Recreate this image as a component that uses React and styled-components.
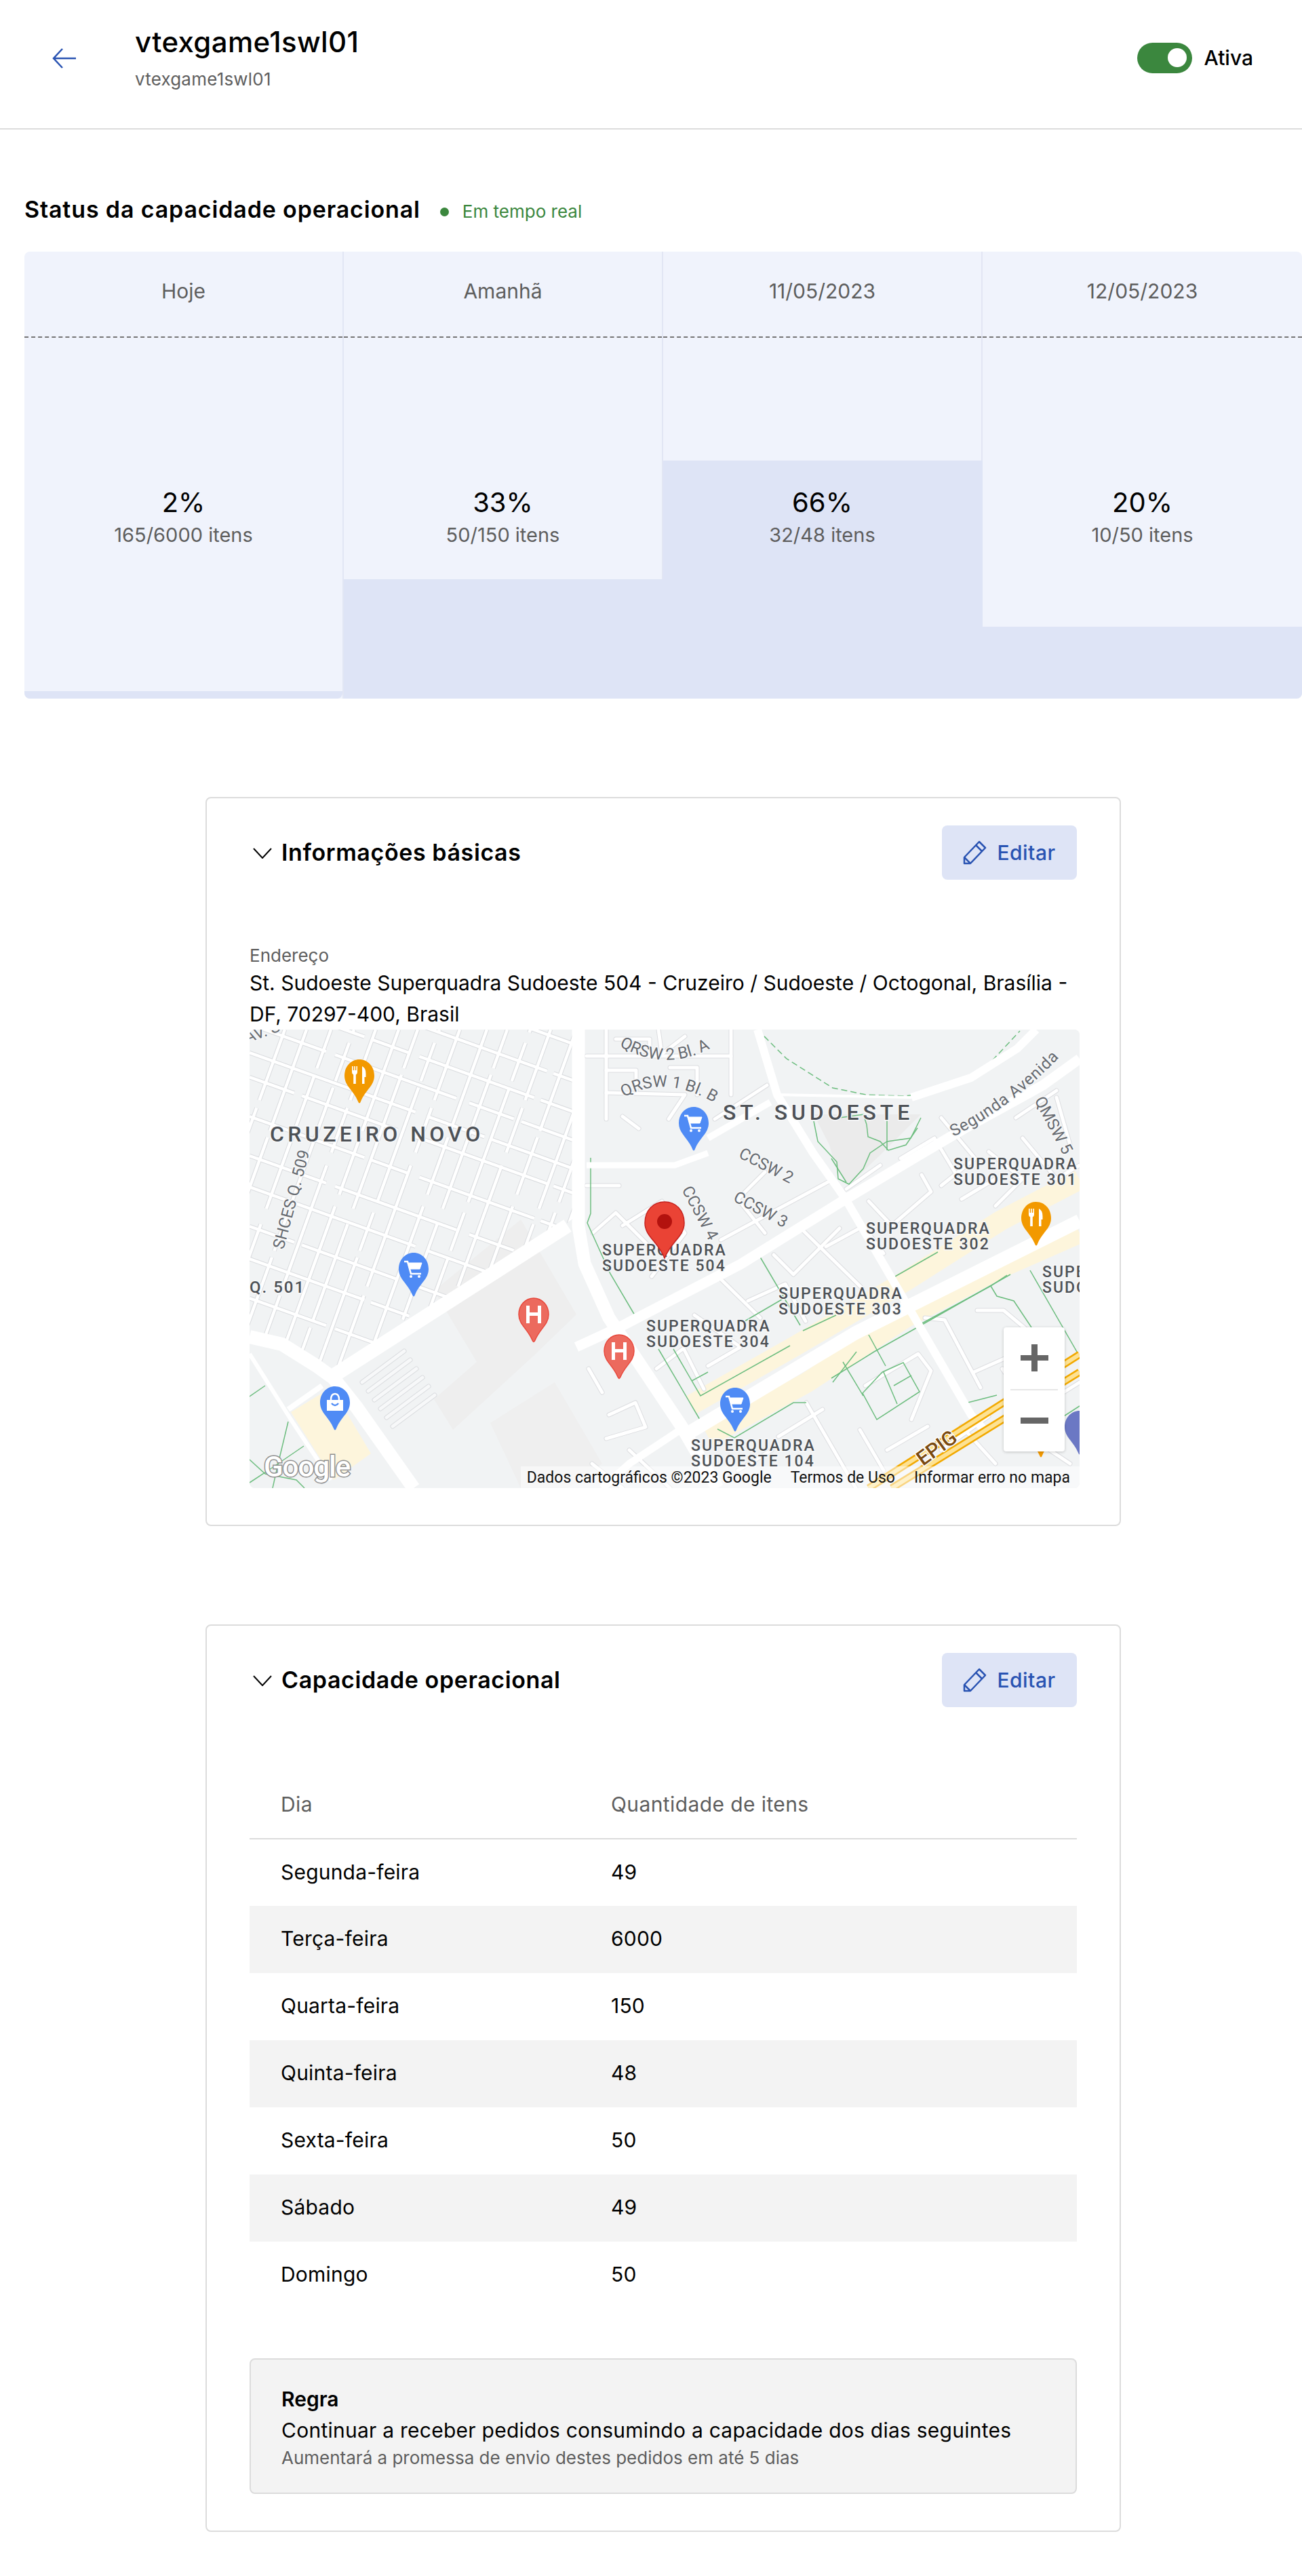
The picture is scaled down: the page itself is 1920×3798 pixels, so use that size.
import styled, { createGlobalStyle } from 'styled-components';

const GlobalStyle = createGlobalStyle`
    html, body {
        margin: 0;
        padding: 0;
        background: #fff;
        color: #000;
        font-family: "Inter", "Liberation Sans", sans-serif;
    }
    * { box-sizing: border-box; }
`

const TopBar = styled.header`
    height: 191px;
    padding: 38px 72px 0 77px;
    display: flex;
    align-items: flex-start;
    border-bottom: 2px solid #dcdcdc;
`
const BackLink = styled.a`
    display: flex;
    width: 36px;
    height: 96px;
    align-items: center;
    margin-right: 86px;
    color: #2953b2;
`
const TitleBlock = styled.div`
    flex: 1;
`
const StoreName = styled.h1`
    margin: 0;
    font-size: 42px;
    letter-spacing: 0.35px;
    line-height: 48px;
    font-weight: 500;
`
const StoreId = styled.div`
    margin-top: 14px;
    font-size: 26px;
    letter-spacing: 0.2px;
    line-height: 34px;
    color: #5e5e5e;
`
const ToggleWrap = styled.div`
    display: flex;
    align-items: center;
    height: 94px;
    gap: 18px;
`
const Toggle = styled.span`
    width: 81px;
    height: 45px;
    border-radius: 23px;
    background: #3b873e;
    display: flex;
    align-items: center;
    justify-content: flex-end;
    padding-right: 8px;

    &::after {
        content: "";
        width: 28px;
        height: 28px;
        border-radius: 50%;
        background: #fff;
    }
`
const ToggleLabel = styled.span`
    font-size: 30px;
    font-weight: 500;
`

const Main = styled.main`
    padding: 95px 0 65px 36px;
`
const StatusHeading = styled.div`
    display: flex;
    align-items: center;
    height: 44px;
`
const StatusTitle = styled.h2`
    margin: 0;
    font-size: 34px;
    font-weight: 600;
    letter-spacing: 0.85px;
`
const LiveDot = styled.span`
    width: 13px;
    height: 13px;
    margin: 8px 20px 0 29px;
    border-radius: 50%;
    background: #3b873e;
`
const LiveText = styled.span`
    margin-top: 6px;
    font-size: 26px;
    color: #3b873e;
`
const CapacityGrid = styled.div`
    margin-top: 41px;
    display: grid;
    grid-template-columns: repeat(4, 1fr);
    background: #f0f3fc;
    border-radius: 8px;
    overflow: hidden;
`
const DayColumn = styled.div`
    position: relative;
    border-right: 2px solid #e2e6f4;

    &:last-child { border-right: 0; }
`
const DayHead = styled.div`
    height: 127px;
    padding-top: 36px;
    text-align: center;
    font-size: 30px;
    line-height: 44px;
    color: #5e5e5e;
    border-bottom: 2px dashed #757575;
`
const DayBody = styled.div`
    position: relative;
    height: 532px;
    display: flex;
    flex-direction: column;
    align-items: center;
    justify-content: center;
`
const DayFill = styled.div`
    position: absolute;
    left: 0;
    right: -2px;
    bottom: 0;
    background: #dee4f6;

    ${DayColumn}:first-child & {
        right: 0;
        border-bottom-right-radius: 8px;
    }
`
const Percent = styled.div`
    position: relative;
    margin-top: -2px;
    font-size: 40px;
    line-height: 50px;
    font-weight: 400;
`
const Usage = styled.div`
    position: relative;
    margin-top: 1px;
    font-size: 29px;
    line-height: 44px;
    color: #5e5e5e;
`

const Card = styled.section`
    width: 1350px;
    margin: ${(p) => p.$top}px auto 0;
    padding: 40px 63px ${(p) => p.$bottom}px 63px;
    border: 2px solid #dcdcdc;
    border-radius: 8px;
`
const CardHeader = styled.div`
    display: flex;
    align-items: center;
    height: 80px;
    padding-left: 5px;
`
const Chevron = styled.svg`
    width: 28px;
    height: 16px;
    margin-right: 14px;
    margin-top: 2px;
`
const CardTitle = styled.h3`
    flex: 1;
    margin: -2px 0 0;
    font-size: 34px;
    font-weight: 600;
    letter-spacing: 0.6px;
`
const EditButton = styled.button`
    width: 199px;
    height: 80px;
    display: flex;
    align-items: center;
    justify-content: center;
    gap: 15px;
    border: 0;
    border-radius: 8px;
    background: #dee4f6;
    color: #2953b2;
    font-family: inherit;
    font-size: 30px;
    font-weight: 500;
    letter-spacing: 0.5px;
`
const FieldLabel = styled.div`
    margin-top: 94px;
    font-size: 26px;
    line-height: 35px;
    color: #5e5e5e;
`
const FieldValue = styled.div`
    font-size: 30px;
    line-height: 46px;
`
const MapFrame = styled.div`
    position: relative;
    width: 1224px;
    height: 676px;
    margin-right: -4px;
    border-radius: 8px;
    overflow: hidden;
    background: #f1f3f4;

    > svg { display: block; }
`
const Attribution = styled.div`
    position: absolute;
    right: 0;
    bottom: 0;
    width: 824px;
    height: 32px;
    padding-right: 14px;
    display: flex;
    justify-content: flex-end;
    align-items: center;
    gap: 28px;
    background: rgba(255, 255, 255, 0.5);
    font-family: "Roboto", sans-serif;
    font-size: 23px;
    color: #111;
`
const ZoomControl = styled.div`
    position: absolute;
    left: 1112px;
    top: 439px;
    width: 90px;
    height: 183px;
    display: flex;
    flex-direction: column;
    background: #fff;
    border-radius: 4px;
    box-shadow: 0 1px 4px rgba(0, 0, 0, 0.2);
`
const ZoomButton = styled.div`
    flex: 1;
    display: flex;
    align-items: center;
    justify-content: center;
    color: #666;

    & + & { border-top: 2px solid #e6e6e6; margin: 0 10px; }
`

const DaysTable = styled.table`
    width: 100%;
    margin-top: 93px;
    border-collapse: collapse;
    font-size: 30px;
`
const HeadCell = styled.th`
    height: 101px;
    padding: 0 0 0 ${(p) => p.$pad}px;
    text-align: left;
    font-weight: 400;
    letter-spacing: 0.4px;
    color: #5e5e5e;
    border-bottom: 2px solid #dcdcdc;
`
const DayRow = styled.tr`
    &:nth-child(even) { background: #f3f3f3; }
`
const DayCell = styled.td`
    height: 99px;
    width: ${(p) => (p.$wide ? "533px" : "auto")};
    padding: 0 0 3px ${(p) => p.$pad}px;
    letter-spacing: 0.2px;
`
const RuleBox = styled.div`
    height: 200px;
    margin-top: 73px;
    padding: 38px 45px 0;
    border: 2px solid #dcdcdc;
    border-radius: 8px;
    background: #f3f3f3;
`
const RuleTitle = styled.div`
    font-size: 30px;
    line-height: 40px;
    font-weight: 600;
`
const RuleText = styled.div`
    font-size: 30px;
    letter-spacing: 0.25px;
    line-height: 46px;
    margin-top: 3px;
`
const RuleHint = styled.div`
    font-size: 26px;
    line-height: 35px;
    color: #5e5e5e;
`

// map drawing parts
const AreaLabel = styled.text`
    font-family: "Roboto", sans-serif;
    font-weight: 500;
    fill: #4d5156;
    stroke: #f7f8f9;
    stroke-width: 3px;
    paint-order: stroke;
`
const StreetLabel = styled.text`
    font-family: "Roboto", sans-serif;
    font-size: 24px;
    fill: #666a70;
    stroke: #f7f8f9;
    stroke-width: 3px;
    paint-order: stroke;
`
const HighwayLabel = styled.text`
    font-family: "Roboto", sans-serif;
    font-size: 30px;
    font-weight: 500;
    fill: #7a4a10;
    stroke: #fff;
    stroke-width: 3px;
    paint-order: stroke;
`
const GoogleMark = styled.text`
    font-family: "Roboto", sans-serif;
    font-size: 42px;
    font-weight: 500;
    letter-spacing: -1px;
    fill: #fff;
    stroke: #8f8f8f;
    stroke-width: 3px;
    paint-order: stroke;
`

const days = [
    { label: "Hoje", pct: 2, usage: "165/6000 itens" },
    { label: "Amanhã", pct: 33, usage: "50/150 itens" },
    { label: "11/05/2023", pct: 66, usage: "32/48 itens" },
    { label: "12/05/2023", pct: 20, usage: "10/50 itens" },
];

const weekdays = [
    ["Segunda-feira", 49],
    ["Terça-feira", 6000],
    ["Quarta-feira", 150],
    ["Quinta-feira", 48],
    ["Sexta-feira", 50],
    ["Sábado", 49],
    ["Domingo", 50],
];

const toPoints = (pts) => pts.map((p) => p.join(",")).join(" ");

const minorStreets = [
    [[526, 0], [526, 132]], [[710, 0], [710, 96]], [[497, 39], [710, 39]],
    [[526, 93], [642, 96], [618, 132]], [[550, 128], [574, 146]], [[603, 0], [608, 36], [642, 10]],
    [[540, 14], [590, 14], [590, 36]], [[620, 56], [660, 56], [660, 96]], [[526, 60], [570, 60], [570, 93]],
    [[686, 132], [763, 82]], [[550, 289], [608, 253], [642, 300], [593, 364]],
    [[695, 310], [860, 221]], [[695, 368], [753, 425]], [[608, 411], [710, 357]],
    [[676, 496], [724, 468], [656, 421]], [[773, 332], [802, 361], [870, 293]],
    [[816, 296], [904, 382]], [[913, 253], [947, 289], [1005, 239], [991, 214]],
    [[996, 425], [1025, 428], [1078, 528]], [[1073, 414], [1112, 414], [1155, 450]],
    [[1068, 505], [1170, 460]], [[908, 525], [986, 478], [1005, 503], [976, 575]],
    [[821, 550], [894, 676]], [[530, 568], [569, 550], [584, 586], [526, 603]],
    [[1090, 180], [1140, 220], [1100, 260]], [[1020, 130], [1070, 190], [1020, 230]],
    [[1190, 100], [1210, 170]], [[1130, 130], [1190, 90]], [[560, 620], [620, 676]],
    [[497, 230], [545, 230]], [[760, 210], [720, 250], [760, 300]], [[506, 300], [540, 270], [590, 320]],
    [[1160, 560], [1224, 520]], [[1110, 500], [1150, 560]], [[940, 620], [1000, 585]],
    [[600, 500], [640, 470], [670, 530]], [[560, 470], [585, 510]], [[735, 400], [790, 375], [820, 430]],
    [[850, 320], [905, 290], [935, 330]], [[880, 235], [930, 200]], [[960, 190], [1010, 160], [1040, 210]],
    [[1050, 250], [1100, 220]], [[1140, 160], [1190, 220], [1224, 200]], [[1050, 585], [1100, 640]],
    [[1020, 620], [1090, 570]], [[780, 600], [845, 560]], [[900, 590], [935, 650]], [[505, 640], [550, 676]],
    [[500, 500], [520, 535]], [[720, 650], [770, 620]], [[1150, 600], [1210, 640]],
];

const majorRoads = [
    { pts: [[124, 510], [469, 289]], w: 21 },
    { pts: [[485, 0], [485, 290], [494, 345], [530, 425], [637, 585], [690, 676]], w: 19 },
    { pts: [[482, 468], [545, 439], [724, 346], [879, 250], [986, 186], [1054, 146], [1170, 82], [1224, 43]], w: 15 },
    { pts: [[0, 453], [48, 464], [99, 496], [124, 514], [158, 557], [242, 676]], w: 20 },
    { pts: [[749, 0], [778, 96], [831, 182], [879, 250], [1064, 568], [1083, 590]], w: 12 },
    { pts: [[976, 100], [1064, 71], [1132, 28], [1160, 0]], w: 12 },
    { pts: [[778, 96], [976, 100]], w: 4 },
    { pts: [[676, 160], [768, 107]], w: 10 },
    { pts: [[497, 200], [627, 200], [676, 182]], w: 9 },
    { pts: [[0, 478], [61, 575], [120, 664]], w: 6 },
    { pts: [[57, 560], [107, 525]], w: 8 },
    { pts: [[637, 589], [560, 640], [520, 676]], w: 11 },
];

const greenPaths = [
    [[503, 189], [503, 271], [498, 285], [532, 360], [568, 421]],
    [[603, 471], [664, 575]], [[625, 471], [665, 540], [797, 466]],
    [[751, 332], [812, 436]], [[816, 444], [865, 421]], [[652, 518], [676, 505]],
    [[858, 514], [921, 475], [976, 444], [1122, 361]], [[913, 450], [938, 496]],
    [[988, 435], [1093, 378], [1117, 362]], [[933, 505], [964, 491], [988, 534], [925, 575], [904, 536], [933, 505]],
    [[935, 505], [955, 552]], [[950, 525], [976, 510]], [[1151, 355], [1224, 482]],
    [[1093, 378], [1102, 393], [1127, 400], [1153, 439]], [[952, 364], [1015, 328]],
    [[690, 589], [715, 602], [802, 550], [821, 550]], [[1059, 550], [1102, 539]],
    [[0, 541], [23, 525]], [[57, 578], [44, 632], [34, 676]], [[80, 614], [23, 653], [0, 668]],
    [[0, 634], [23, 655], [69, 664], [81, 676]],
    [[832, 135], [838, 165], [866, 195], [868, 220], [884, 228], [905, 205], [915, 182], [940, 165], [975, 160], [990, 130]],
    [[910, 140], [912, 158], [930, 165], [942, 178], [968, 170], [985, 145]],
    [[870, 130], [905, 125], [910, 140]], [[940, 178], [940, 130]],
    [[858, 190], [880, 225]], [[1170, 590], [1224, 555]],
    [[730, 430], [790, 395]], [[875, 490], [905, 540]], [[860, 520], [895, 475]],
];

// street rows of the Cruzeiro grid: start point and dash rhythm differ per line so it doesn't read as a ruler grid
const steepStarts = [-130, -98, -62, -28, 4, 38, 66, 98, 128, 168, 198, 232, 262, 300, 340, 366, 392, 432];
const shallowStarts = [-150, -96, -50, -8, 34, 70, 128, 186, 232, 290, 338, 396];
const dashes = ["120 14 190 20 70 12", "260 18 90 10", "70 12 150 24 210 10", "180 10 60 16"];

function CruzeiroGrid() {
    const lines = [
        ...steepStarts.map((x, i) => ({ d: `M${x} 505L${x + 182} 0`, dash: dashes[i % 4] })),
        ...shallowStarts.map((y, i) => ({ d: `M0 ${y}L480 ${y + 172}`, dash: dashes[(i + 1) % 4] })),
    ];
    return (
        <g clipPath="url(#cruzeiro)" fill="none">
            {lines.map((l) => <path key={`e${l.d}`} d={l.d} stroke="#d9dbde" strokeWidth="6.500" strokeDasharray={l.dash} />)}
            {lines.map((l) => <path key={`w${l.d}`} d={l.d} stroke="#fff" strokeWidth="4.500" strokeDasharray={l.dash} />)}
        </g>
    );
}

const pinShape = "M22 0C34 0 44 10 44 24C44 39 31 45 24 62Q22 67 20 62C13 45 0 39 0 24C0 10 10 0 22 0Z";

function Pin({ x, y, color, kind, edge }) {
    return (
        <g transform={`translate(${x - 22} ${y})`}>
            <path d={pinShape} fill={color} stroke={edge || "none"} strokeWidth="1.5" />
            {kind === "food" && (
                <g fill="#fff">
                    <path d="M11 10h1.6v6h1.6v-6h1.6v6h1.6v-6H19v9q0 2.5-2.2 3.4V36h-3.6V22.4Q11 21.5 11 19z" />
                    <path d="M26 36V10q5.5 2.5 5.5 11v5H29.500V36z" />
                </g>
            )}
            {kind === "cart" && (
                <g fill="none" stroke="#fff">
                    <path d="M8 13h5l5 18h15" strokeWidth="2.500" />
                    <path d="M13 15h21l-3 9H16z" fill="#fff" strokeWidth="1" />
                    <circle cx="18" cy="35" r="2" fill="#fff" strokeWidth="0" />
                    <circle cx="30" cy="35" r="2" fill="#fff" strokeWidth="0" />
                </g>
            )}
            {kind === "bag" && (
                <g>
                    <path d="M10 20h24v16H10z" fill="#fff" />
                    <path d="M16 20q0-9 6-9t6 9" fill="none" stroke="#fff" strokeWidth="2.500" />
                    <path d="M17 25q5 6 10 0" fill="none" stroke="#4f8bf5" strokeWidth="2.500" />
                </g>
            )}
            {kind === "hospital" && (
                <path d="M11 11h5v10h12V11h5v26h-5V26H16v11h-5z" fill="#fff" />
            )}
        </g>
    );
}

function AreaName({ x, y, suffix }) {
    return (
        <AreaLabel fontSize="23" letterSpacing="2">
            <tspan x={x} y={y}>SUPERQUADRA</tspan>
            <tspan x={x} y={y + 23}>SUDOESTE {suffix}</tspan>
        </AreaLabel>
    );
}

function MapDrawing() {
    const parking = [0, 1, 2, 3, 4, 5].map((i) => `M${166 + i * 9} ${520 + i * 13}L${228 + i * 9} ${474 + i * 13}`);

    return (
        <svg width="1224" height="676" viewBox="0 0 1224 676">
            <defs>
                <clipPath id="cruzeiro">
                    <path d="M0 0H476V280L124 505L48 455L0 445Z" />
                </clipPath>
                <path id="qrsw2" d="M545 24Q610 62 675 30" />
                <path id="qrsw1" d="M552 100Q610 66 682 106" />
                <path id="segunda" d="M1038 158Q1130 112 1208 26" />
            </defs>
            <rect width="1224" height="676" fill="#f1f3f4" />

            {/* hospital block and park */}
            <path d="M272 545L335 490L272 385L400 280L482 420L420 480L300 590Z" fill="#eeeeee" />
            <path d="M355 580L450 520L520 640L470 676H400Z" fill="#efefef" />
            <path d="M832 125H990L930 185L884 228L865 205L855 170Z" fill="#ebebeb" />

            {/* commercial strips */}
            <path d="M61 564L107 536L145 568L179 625L124 664Z" fill="#fdf5dc" />
            <polyline points={toPoints([[652, 553], [802, 468], [967, 371], [1107, 282], [1224, 221]])} fill="none" stroke="#fdf5dc" strokeWidth="30" />
            <polyline points={toPoints([[676, 600], [821, 521], [967, 425], [1104, 353], [1224, 300]])} fill="none" stroke="#fdf5dc" strokeWidth="30" />

            <CruzeiroGrid />

            {/* parking rows */}
            <path d={parking.join("")} stroke="#d9dbde" strokeWidth="7" strokeLinecap="round" fill="none" />
            <path d={parking.join("")} stroke="#f7f8f9" strokeWidth="5" strokeLinecap="round" fill="none" />

            {/* streets */}
            {minorStreets.map((pts, i) => (
                <polyline key={`e${i}`} points={toPoints(pts)} fill="none" stroke="#dcdde0" strokeWidth="7" strokeLinejoin="round" strokeLinecap="round" />
            ))}
            {minorStreets.map((pts, i) => (
                <polyline key={`s${i}`} points={toPoints(pts)} fill="none" stroke="#fff" strokeWidth="5" strokeLinejoin="round" strokeLinecap="round" />
            ))}

            {/* green footpaths */}
            <polyline points="749,0 792,43 860,86 909,96 967,98 1025,89 1078,64 1136,2" fill="none" stroke="#6dbd7f" strokeWidth="1.500" strokeDasharray="9 5" />
            {greenPaths.map((pts, i) => (
                <polyline key={`g${i}`} points={toPoints(pts)} fill="none" stroke="#6dbd7f" strokeWidth="1.500" />
            ))}

            {/* main roads */}
            {majorRoads.map((road, i) => (
                <polyline key={`m${i}`} points={toPoints(road.pts)} fill="none" stroke="#fff" strokeWidth={road.w} strokeLinejoin="round" />
            ))}
            <polyline points="637,601 894,447 1224,282" fill="none" stroke="#fff" strokeWidth="20" />

            {/* EPIG highway */}
            <g fill="none">
                <path d="M913 676L1224 479" stroke="#f2a900" strokeWidth="11" />
                <path d="M913 676L1224 479" stroke="#fde293" strokeWidth="6" />
                <path d="M947 676L1224 505" stroke="#f2a900" strokeWidth="11" />
                <path d="M947 676L1224 505" stroke="#fde293" strokeWidth="6" />
            </g>

            <HighwayLabel x="993" y="644" transform="rotate(-36 993 644)">EPIG</HighwayLabel>
            <AreaLabel fontSize="32" letterSpacing="5.400" x="30" y="165">CRUZEIRO NOVO</AreaLabel>
            <AreaLabel fontSize="32" letterSpacing="5.900" x="698" y="133">ST. SUDOESTE</AreaLabel>
            <AreaName x={1038} y={206} suffix="301" />
            <AreaName x={909} y={301} suffix="302" />
            <AreaName x={520} y={333} suffix="504" />
            <AreaName x={780} y={397} suffix="303" />
            <AreaName x={585} y={445} suffix="304" />
            <AreaName x={651} y={621} suffix="104" />
            <AreaName x={1169} y={365} suffix="" />
            <AreaLabel fontSize="24" letterSpacing="2" x="0" y="388">Q. 501</AreaLabel>

            <StreetLabel x="50" y="325" transform="rotate(-75 50 325)">SHCES Q. 509</StreetLabel>
            <StreetLabel><textPath href="#qrsw2">QRSW 2 Bl. A</textPath></StreetLabel>
            <StreetLabel><textPath href="#qrsw1">QRSW 1 Bl. B</textPath></StreetLabel>
            <StreetLabel letterSpacing="0.800"><textPath href="#segunda">Segunda Avenida</textPath></StreetLabel>
            <StreetLabel x="1157" y="104" transform="rotate(62 1157 104)">QMSW 5</StreetLabel>
            <StreetLabel x="720" y="188" transform="rotate(27 720 188)">CCSW 2</StreetLabel>
            <StreetLabel x="712" y="252" transform="rotate(28 712 252)">CCSW 3</StreetLabel>
            <StreetLabel x="637" y="236" transform="rotate(62 637 236)">CCSW 4</StreetLabel>
            <StreetLabel x="-4" y="20" transform="rotate(-20 -4 20)">AV. S</StreetLabel>

            <GoogleMark x="21" y="659">Google</GoogleMark>

            <Pin x={162} y={44} color="#f29900" kind="food" />
            <Pin x={655} y={114} color="#4f8bf5" kind="cart" />
            <Pin x={242} y={329} color="#4f8bf5" kind="cart" />
            <Pin x={126} y={526} color="#4f8bf5" kind="bag" />
            <Pin x={419} y={396} color="#ec6a5e" edge="#e8483c" kind="hospital" />
            <Pin x={545} y={450} color="#ec6a5e" edge="#e8483c" kind="hospital" />
            <Pin x={1160} y={254} color="#f29900" kind="food" />
            <Pin x={716} y={528} color="#4f8bf5" kind="cart" />
            <Pin x={1167} y={566} color="#f29900" />
            <Pin x={1224} y={562} color="#6b78c4" />

            <g transform="translate(583 254)">
                <path d="M29 0C46 0 58 13 58 31C58 51 39 58 29 83C19 58 0 51 0 31C0 13 12 0 29 0Z" fill="#ea4335" stroke="#c5221f" strokeWidth="1.500" />
                <ellipse cx="29" cy="29" rx="11" ry="11" fill="#b3120e" />
            </g>
        </svg>
    );
}

function PencilIcon() {
    return (
        <svg width="35" height="36" viewBox="0 0 35 36" fill="none" stroke="currentColor" strokeWidth="2.500" strokeLinejoin="round">
            <path d="M24 2L33 11L11 34H2V25Z" />
            <path d="M19 7L28 16M2 25L11 34" />
        </svg>
    );
}

function ChevronIcon() {
    return (
        <Chevron viewBox="0 0 28 16" fill="none" stroke="#000" strokeWidth="2">
            <path d="M1 1L14 15L27 1" />
        </Chevron>
    );
}

function SectionHeader({ title }) {
    return (
        <CardHeader>
            <ChevronIcon />
            <CardTitle>{title}</CardTitle>
            <EditButton>
                <PencilIcon />
                Editar
            </EditButton>
        </CardHeader>
    );
}

function App() {
    return (
        <>
            <GlobalStyle />
            <TopBar>
                <BackLink>
                    <svg width="36" height="30" viewBox="0 0 36 30" fill="none" stroke="currentColor" strokeWidth="2.500">
                        <path d="M35 15H2M15 1L2 15L15 29" />
                    </svg>
                </BackLink>
                <TitleBlock>
                    <StoreName>vtexgame1swl01</StoreName>
                    <StoreId>vtexgame1swl01</StoreId>
                </TitleBlock>
                <ToggleWrap>
                    <Toggle />
                    <ToggleLabel>Ativa</ToggleLabel>
                </ToggleWrap>
            </TopBar>

            <Main>
                <StatusHeading>
                    <StatusTitle>Status da capacidade operacional</StatusTitle>
                    <LiveDot />
                    <LiveText>Em tempo real</LiveText>
                </StatusHeading>

                <CapacityGrid>
                    {days.map((day) => (
                        <DayColumn key={day.label}>
                            <DayHead>{day.label}</DayHead>
                            <DayBody>
                                <DayFill style={{ height: `${day.pct}%` }} />
                                <Percent>{day.pct}%</Percent>
                                <Usage>{day.usage}</Usage>
                            </DayBody>
                        </DayColumn>
                    ))}
                </CapacityGrid>

                <Card $top={145} $bottom={54}>
                    <SectionHeader title="Informações básicas" />
                    <FieldLabel>Endereço</FieldLabel>
                    <FieldValue>St. Sudoeste Superquadra Sudoeste 504 - Cruzeiro / Sudoeste / Octogonal, Brasília - DF, 70297-400, Brasil</FieldValue>
                    <MapFrame>
                        <MapDrawing />
                        <ZoomControl>
                            <ZoomButton>
                                <svg width="41" height="40" viewBox="0 0 41 40" fill="currentColor"><path d="M16 0h9v16h16v8H25v16h-9V24H0v-8h16z" /></svg>
                            </ZoomButton>
                            <ZoomButton>
                                <svg width="41" height="9" viewBox="0 0 41 9" fill="currentColor"><path d="M0 0h41v9H0z" /></svg>
                            </ZoomButton>
                        </ZoomControl>
                        <Attribution>
                            <span>Dados cartográficos ©2023 Google</span>
                            <span>Termos de Uso</span>
                            <span>Informar erro no mapa</span>
                        </Attribution>
                    </MapFrame>
                </Card>

                <Card $top={145} $bottom={54}>
                    <SectionHeader title="Capacidade operacional" />
                    <DaysTable>
                        <thead>
                            <tr>
                                <HeadCell $pad={46}>Dia</HeadCell>
                                <HeadCell $pad={0}>Quantidade de itens</HeadCell>
                            </tr>
                        </thead>
                        <tbody>
                            {weekdays.map(([name, qty]) => (
                                <DayRow key={name}>
                                    <DayCell $pad={46} $wide>{name}</DayCell>
                                    <DayCell $pad={0}>{qty}</DayCell>
                                </DayRow>
                            ))}
                        </tbody>
                    </DaysTable>
                    <RuleBox>
                        <RuleTitle>Regra</RuleTitle>
                        <RuleText>Continuar a receber pedidos consumindo a capacidade dos dias seguintes</RuleText>
                        <RuleHint>Aumentará a promessa de envio destes pedidos em até 5 dias</RuleHint>
                    </RuleBox>
                </Card>
            </Main>
        </>
    );
}

export default App;
